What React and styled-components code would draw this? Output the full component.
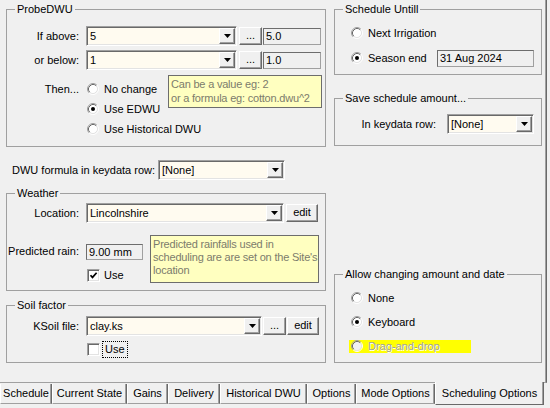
import React from 'react';
import styled, { createGlobalStyle } from 'styled-components';

const Global = createGlobalStyle`
  html, body { margin: 0; padding: 0; background: #f0f0f0; }
  body { font-family: "Liberation Sans", Arial, sans-serif; font-size: 11px; color: #000; }
  * { box-sizing: border-box; }
`;

const Window = styled.div`
  width: 550px;
  height: 408px;
  overflow: hidden;
  background: #f0f0f0;
  display: flex;
  flex-direction: column;
`;

const Sheet = styled.div`
  width: 547px;
  height: 383px;
  flex: none;
  border-right: 1px solid #696969;
  border-bottom: 1px solid #a0a0a0;
  box-shadow: inset -1px 0 #a0a0a0;
  padding: 9px 0 0 6px;
  display: grid;
  grid-template-columns: 320px 208px;
  column-gap: 8px;
  align-content: start;
`;

const Column = styled.div`
  display: flex;
  flex-direction: column;
`;

const Group = styled.div`
  position: relative;
  flex: none;
  border: 1px solid #a0a0a0;
  height: ${p => p.$h}px;
  margin-top: ${p => (p.$push ? 'auto' : `${p.$mt || 0}px`)};
  padding: ${p => p.$pad || '0'};
`;

const Legend = styled.span`
  position: absolute;
  left: 8px;
  top: -7px;
  padding: 0 2px;
  line-height: 13px;
  background: #f0f0f0;
  white-space: nowrap;
`;

const FieldRow = styled.div`
  display: flex;
  align-items: center;
  height: ${p => p.$h || 20}px;
  margin-top: ${p => p.$mt || 0}px;
  padding-left: ${p => p.$pl || 0}px;
  padding-right: ${p => p.$pr || 0}px;
  justify-content: ${p => (p.$end ? 'flex-end' : 'flex-start')};
`;

const Label = styled.div`
  flex: none;
  width: ${p => (p.$w ? `${p.$w}px` : 'auto')};
  text-align: ${p => (p.$left ? 'left' : 'right')};
  padding-right: ${p => (p.$left ? 0 : 7)}px;
  margin-right: ${p => p.$mr || 0}px;
  white-space: nowrap;
  line-height: 13px;
`;

const ComboBox = styled.div`
  flex: none;
  width: ${p => p.$w}px;
  height: 20px;
  background: #fffbf0;
  border: 1px solid;
  border-color: #a0a0a0 #fff #fff #a0a0a0;
  box-shadow: inset 1px 1px #696969, inset -1px -1px #e3e3e3;
  display: flex;
  align-items: center;
`;

const ComboText = styled.div`
  flex: 1;
  padding-left: 3px;
  white-space: nowrap;
  overflow: hidden;
  line-height: 13px;
`;

const ComboButton = styled.div`
  flex: none;
  width: 16px;
  height: 16px;
  margin-right: 1px;
  background: #f0f0f0;
  border: 1px solid;
  border-color: #fff #696969 #696969 #fff;
  box-shadow: inset -1px -1px #a0a0a0;
  display: flex;
  align-items: center;
  justify-content: center;
`;

const Button = styled.div`
  flex: none;
  width: ${p => p.$w}px;
  height: 18px;
  margin-left: ${p => p.$ml || 0}px;
  background: #f0f0f0;
  border: 1px solid;
  border-color: #fff #696969 #696969 #fff;
  box-shadow: inset -1px -1px #a0a0a0;
  display: flex;
  align-items: center;
  justify-content: center;
  line-height: 13px;
  padding-bottom: 1px;
`;

const ReadOnly = styled.div`
  flex: none;
  width: ${p => p.$w}px;
  height: ${p => p.$h || 17}px;
  margin-left: ${p => (p.$auto ? 'auto' : `${p.$ml || 0}px`)};
  background: #f0f0f0;
  border: 1px solid;
  border-color: #6d6d6d #a0a0a0 #a0a0a0 #6d6d6d;
  padding-left: 2px;
  display: flex;
  align-items: center;
  white-space: nowrap;
  align-self: center;
`;

const Hint = styled.div`
  grid-column: 3;
  grid-row: 1 / span 2;
  height: ${p => p.$h}px;
  margin-top: ${p => p.$mt || 0}px;
  background: #ffffc0;
  border: 1px solid #6d6d6d;
  color: #7c7c6c;
  padding: ${p => p.$pad || '1px 2px'};
  line-height: ${p => p.$lh || 14}px;
  letter-spacing: -0.2px;
  white-space: nowrap;
  overflow: hidden;
`;

const ThenGrid = styled.div`
  display: grid;
  grid-template-columns: 79px 82px 154px;
  grid-template-rows: repeat(3, 20px);
  margin-top: 9px;
`;

const GridLabel = styled.div`
  grid-column: 1;
  grid-row: ${p => p.$row || 1};
  align-self: center;
  text-align: right;
  padding-right: 7px;
  white-space: nowrap;
  line-height: 13px;
`;

const GridCell = styled.div`
  grid-column: ${p => p.$col};
  grid-row: ${p => p.$row};
  display: flex;
  align-items: center;
  min-width: 0;
`;

const RainGrid = styled.div`
  display: grid;
  grid-template-columns: 79px 64px 169px;
  grid-template-rows: 33px 15px;
  margin-top: 12px;
`;

const RadioStack = styled.div`
  display: flex;
  flex-direction: column;
  gap: ${p => p.$gap}px;
`;

const RadioRow = styled.div`
  display: flex;
  align-items: center;
  height: 20px;
  padding-right: ${p => p.$pr || 0}px;
`;

const RadioControl = styled.div`
  flex: none;
  display: flex;
  align-items: center;
  gap: 5px;
  padding-left: ${p => (p.$hl ? 2 : 1)}px;
  margin-left: ${p => (p.$hl ? -1 : 0)}px;
  height: 13px;
  width: ${p => (p.$hl ? '122px' : 'auto')};
  background: ${p => (p.$hl ? '#ffff00' : 'transparent')};
  white-space: nowrap;
  line-height: 13px;
  color: ${p => (p.$disabled ? '#a0a0a0' : '#000')};
  text-shadow: ${p => (p.$disabled ? '1px 1px 0 #fff' : 'none')};
`;

const CheckControl = styled.div`
  display: flex;
  align-items: center;
  gap: 4px;
  padding-left: 1px;
  line-height: 13px;
  white-space: nowrap;
`;

const CheckBoxBox = styled.div`
  flex: none;
  width: 13px;
  height: 13px;
  background: #fff;
  border: 1px solid;
  border-color: #a0a0a0 #fff #fff #a0a0a0;
  box-shadow: inset 1px 1px #696969, inset -1px -1px #e3e3e3;
  display: flex;
  align-items: center;
  justify-content: center;
`;

const FocusText = styled.span`
  outline: 1px dotted #000;
  outline-offset: 1px;
  padding: 0 1px;
`;

const TabBar = styled.div`
  display: flex;
  align-items: flex-start;
  flex: none;
  height: 25px;
`;

const Tab = styled.div`
  position: relative;
  flex: none;
  width: ${p => p.$w}px;
  height: ${p => (p.$active ? 23 : 20)}px;
  margin-top: ${p => (p.$active ? -1 : 1)}px;
  padding-top: ${p => (p.$active ? 1 : 0)}px;
  background: #f0f0f0;
  border-left: 1px solid #fff;
  border-right: 1px solid #696969;
  border-bottom: 1px solid ${p => (p.$active ? '#696969' : '#a0a0a0')};
  box-shadow: inset -1px 0 #a0a0a0;
  display: flex;
  align-items: center;
  justify-content: center;
  white-space: nowrap;
  line-height: 13px;
`;

const Arrow = () => (
  <svg width="7" height="4" viewBox="0 0 7 4">
    <polygon points="0,0 7,0 3.5,4" fill="#000" />
  </svg>
);

const Combo = ({ w, children }) => (
  <ComboBox $w={w}>
    <ComboText>{children}</ComboText>
    <ComboButton>
      <Arrow />
    </ComboButton>
  </ComboBox>
);

const RadioGlyph = ({ checked, disabled }) => (
  <svg width="12" height="12" viewBox="0 0 12 12" style={{ flex: 'none' }}>
    <circle cx="6" cy="6" r="4.5" fill={disabled ? '#f0f0f0' : '#fff'} />
    <path d="M2.11 9.89A5.5 5.5 0 0 1 9.89 2.11" fill="none" stroke="#a0a0a0" />
    <path d="M9.89 2.11A5.5 5.5 0 0 1 2.11 9.89" fill="none" stroke="#ffffff" />
    <path d="M2.82 9.18A4.5 4.5 0 0 1 9.18 2.82" fill="none" stroke="#696969" />
    <path d="M9.18 2.82A4.5 4.5 0 0 1 2.82 9.18" fill="none" stroke="#e3e3e3" />
    {checked && <circle cx="6" cy="6" r="2" fill="#000" />}
  </svg>
);

const Radio = ({ checked, disabled, hl, children }) => (
  <RadioControl $hl={hl} $disabled={disabled}>
    <RadioGlyph checked={checked} disabled={disabled} />
    <span>{children}</span>
  </RadioControl>
);

const Check = ({ checked, focus, children }) => (
  <CheckControl>
    <CheckBoxBox>
      {checked && (
        <svg width="9" height="9" viewBox="0 0 9 9">
          <polyline points="1.5,4.2 3.5,6.4 7.6,1.8" fill="none" stroke="#000" strokeWidth="1.7" />
        </svg>
      )}
    </CheckBoxBox>
    {focus ? <FocusText>{children}</FocusText> : <span>{children}</span>}
  </CheckControl>
);

const tabs = [
  { label: 'Schedule', w: 52 },
  { label: 'Current State', w: 75 },
  { label: 'Gains', w: 41 },
  { label: 'Delivery', w: 52 },
  { label: 'Historical DWU', w: 87 },
  { label: 'Options', w: 49 },
  { label: 'Mode Options', w: 79 },
  { label: 'Scheduling Options', w: 109, active: true },
];

export default function App() {
  return (
    <>
      <Global />
      <Window>
        <Sheet>
          <Column>
            <Group $h={138} $pad="16px 0 0 0">
              <Legend>ProbeDWU</Legend>
              <FieldRow>
                <Label $w={79}>If above:</Label>
                <Combo w={151}>5</Combo>
                <Button $w={23} $ml={2}>...</Button>
                <ReadOnly $w={58} $ml={1}>5.0</ReadOnly>
              </FieldRow>
              <FieldRow $mt={4}>
                <Label $w={79}>or below:</Label>
                <Combo w={151}>1</Combo>
                <Button $w={23} $ml={2}>...</Button>
                <ReadOnly $w={58} $ml={1}>1.0</ReadOnly>
              </FieldRow>
              <ThenGrid>
                <GridLabel>Then...</GridLabel>
                <GridCell $col={2} $row={1}>
                  <Radio>No change</Radio>
                </GridCell>
                <GridCell $col={2} $row={2}>
                  <Radio checked>Use EDWU</Radio>
                </GridCell>
                <GridCell $col="2 / span 2" $row={3}>
                  <Radio>Use Historical DWU</Radio>
                </GridCell>
                <Hint $h={33} $mt={-4}>
                  Can be a value eg: 2
                  <br />
                  or a formula eg: cotton.dwu^2
                </Hint>
              </ThenGrid>
            </Group>

            <FieldRow $mt={13} $pl={6}>
              <Label $w={146} $left>DWU formula in keydata row:</Label>
              <Combo w={127}>[None]</Combo>
            </FieldRow>

            <Group $h={98} $mt={13} $pad="9px 0 0 0">
              <Legend>Weather</Legend>
              <FieldRow>
                <Label $w={79}>Location:</Label>
                <Combo w={198}>Lincolnshire</Combo>
                <Button $w={32} $ml={2}>edit</Button>
              </FieldRow>
              <RainGrid>
                <GridLabel>Predicted rain:</GridLabel>
                <GridCell $col={2} $row={1}>
                  <ReadOnly $w={57} $h={16}>9.00 mm</ReadOnly>
                </GridCell>
                <GridCell $col={2} $row={2}>
                  <Check checked>Use</Check>
                </GridCell>
                <Hint $h={48} $lh={13} $pad="2px 2px">
                  Predicted rainfalls used in
                  <br />
                  scheduling are are set on the Site's
                  <br />
                  location
                </Hint>
              </RainGrid>
            </Group>

            <Group $h={58} $mt={14} $pad="10px 0 0 0">
              <Legend>Soil factor</Legend>
              <FieldRow>
                <Label $w={79}>KSoil file:</Label>
                <Combo w={176}>clay.ks</Combo>
                <Button $w={23} $ml={1}>...</Button>
                <Button $w={32} $ml={1}>edit</Button>
              </FieldRow>
              <FieldRow $mt={6} $h={14} $pl={79}>
                <Check focus>Use</Check>
              </FieldRow>
            </Group>
          </Column>

          <Column>
            <Group $h={66} $pad="13px 0 0 15px">
              <Legend>Schedule Untill</Legend>
              <RadioStack $gap={5}>
                <RadioRow>
                  <Radio>Next Irrigation</Radio>
                </RadioRow>
                <RadioRow $pr={7}>
                  <Radio checked>Season end</Radio>
                  <ReadOnly $w={97} $auto>31 Aug 2024</ReadOnly>
                </RadioRow>
              </RadioStack>
            </Group>

            <Group $h={48} $mt={23} $pad="15px 0 0 0">
              <Legend>Save schedule amount...</Legend>
              <FieldRow $end $pr={7}>
                <Label $mr={4}>In keydata row:</Label>
                <Combo w={87}>[None]</Combo>
              </FieldRow>
            </Group>

            <Group $h={89} $push $pad="13px 0 0 15px">
              <Legend>Allow changing amount and date</Legend>
              <RadioStack $gap={4}>
                <RadioRow>
                  <Radio>None</Radio>
                </RadioRow>
                <RadioRow>
                  <Radio checked>Keyboard</Radio>
                </RadioRow>
                <RadioRow>
                  <Radio disabled hl>Drag-and-drop</Radio>
                </RadioRow>
              </RadioStack>
            </Group>
          </Column>
        </Sheet>

        <TabBar>
          {tabs.map(t => (
            <Tab key={t.label} $w={t.w} $active={t.active}>
              {t.label}
            </Tab>
          ))}
        </TabBar>
      </Window>
    </>
  );
}
